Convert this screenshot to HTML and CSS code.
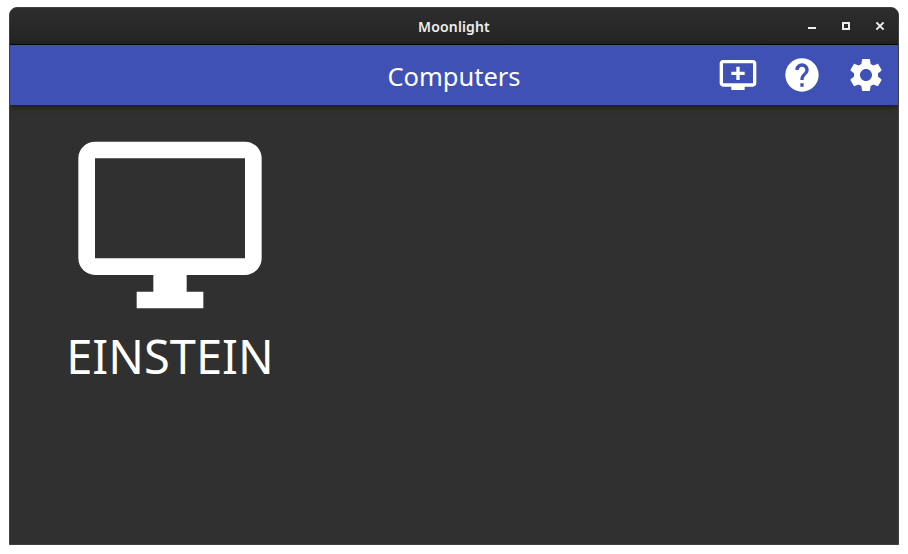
FILE: index.html
```html
<!DOCTYPE html>
<html lang="en">
<head>
<meta charset="utf-8">
<title>Moonlight</title>
<link rel="stylesheet" href="styles.css">
</head>
<body>
<div class="window">
  <header class="titlebar">
    <span class="window-title">Moonlight</span>
    <div class="window-controls">
      <svg width="10" height="10" viewBox="0 0 10 10"><path d="M1 6h8v2H1z"/></svg>
      <svg width="10" height="10" viewBox="0 0 10 10"><path fill-rule="evenodd" d="M1 1h8v8H1zM3 3v4h4V3z"/></svg>
      <svg width="10" height="10" viewBox="0 0 10 10"><path d="M1.4 1.4l7.2 7.2M8.6 1.4l-7.2 7.2" stroke="#eeeeec" stroke-width="2"/></svg>
    </div>
  </header>
  <nav class="toolbar">
    <h1 class="page-title">Computers</h1>
    <div class="actions">
      <svg class="icon" viewBox="0 0 24 24"><path d="M21 3H3c-1.11 0-2 .89-2 2v12c0 1.1.89 2 2 2h5v2h8v-2h5c1.1 0 1.99-.9 1.99-2L23 5c0-1.11-.9-2-2-2zm0 14H3V5h18v12zm-5-7v2h-3v3h-2v-3H8v-2h3V7h2v3h3z"/></svg>
      <svg class="icon" viewBox="0 0 24 24"><path d="M12 2C6.48 2 2 6.48 2 12s4.48 10 10 10 10-4.48 10-10S17.52 2 12 2zm1 17h-2v-2h2v2zm2.07-7.75l-.9.92C13.45 12.9 13 13.5 13 15h-2v-.5c0-1.1.45-2.1 1.17-2.83l1.24-1.26c.37-.36.59-.86.59-1.41 0-1.1-.9-2-2-2s-2 .9-2 2H8c0-2.21 1.79-4 4-4s4 1.79 4 4c0 .88-.36 1.68-.93 2.25z"/></svg>
      <svg class="icon" viewBox="0 0 24 24"><path d="M19.14 12.94c.04-.3.06-.61.06-.94 0-.32-.02-.64-.07-.94l2.03-1.58c.18-.14.23-.41.12-.61l-1.92-3.32c-.12-.22-.37-.29-.59-.22l-2.39.96c-.5-.38-1.03-.7-1.62-.94L14.4 2.81c-.04-.24-.24-.41-.48-.41h-3.84c-.24 0-.43.17-.47.41L9.25 5.35C8.66 5.59 8.12 5.92 7.63 6.29L5.24 5.33c-.22-.08-.47 0-.59.22L2.74 8.87c-.12.21-.08.47.12.61l2.03 1.58C4.84 11.36 4.8 11.69 4.8 12s.02.64.07.94l-2.03 1.58c-.18.14-.23.41-.12.61l1.92 3.32c.12.22.37.29.59.22l2.39-.96c.5.38 1.03.7 1.62.94l.36 2.54c.05.24.24.41.48.41h3.84c.24 0 .44-.17.47-.41l.36-2.54c.59-.24 1.13-.56 1.62-.94l2.39.96c.22.08.47 0 .59-.22l1.92-3.32c.12-.22.07-.47-.12-.61zM12 15.6c-1.98 0-3.6-1.62-3.6-3.6s1.62-3.6 3.6-3.6 3.6 1.62 3.6 3.6-1.62 3.6-3.6 3.6z"/></svg>
    </div>
  </nav>
  <main class="computers">
    <div class="computer">
      <svg class="computer-icon" viewBox="0 0 24 24"><path d="M21 2H3c-1.1 0-2 .9-2 2v12c0 1.1.9 2 2 2h7v2H8v2h8v-2h-2v-2h7c1.1 0 2-.9 2-2V4c0-1.1-.9-2-2-2zm0 14H3V4h18v12z"/></svg>
      <span class="computer-name">EINSTEIN</span>
    </div>
  </main>
</div>
</body>
</html>
```
FILE: styles.css
```css
* {
  box-sizing: border-box;
}

body {
  margin: 0;
  padding: 7px 9px 9px;
  height: 554px;
  background: #fff;
  font-family: "Noto Sans", "Open Sans", sans-serif;
  overflow: hidden;
}

svg {
  display: block;
  fill: #fff;
}

.window {
  display: flex;
  flex-direction: column;
  height: 538px;
  border: 1px solid #404040;
  border-radius: 8px 8px 0 0;
  background: #303030;
  overflow: hidden;
}

.titlebar {
  display: grid;
  grid-template-columns: 1fr auto 1fr;
  align-items: center;
  height: 37px;
  flex: none;
  background: linear-gradient(#2d2d2d, #242424);
  border-bottom: 1px solid #050505;
}

.window-title {
  grid-column: 2;
  padding-top: 1px;
  font-size: 14px;
  font-weight: 600;
  letter-spacing: 0.15px;
  line-height: 21px;
  color: #eeeeec;
}

.window-controls {
  justify-self: end;
  display: flex;
  gap: 24px;
  padding-right: 13px;
}

.window-controls svg {
  fill: #eeeeec;
}

.toolbar {
  display: grid;
  grid-template-columns: 1fr auto 1fr;
  align-items: center;
  height: 60px;
  flex: none;
  background: #3f51b5;
  box-shadow: 0 1px 6px rgba(0, 0, 0, 0.55);
}

.page-title {
  grid-column: 2;
  margin: 0;
  padding-top: 2px;
  font-size: 25.5px;
  font-weight: 400;
  line-height: 36px;
  color: #fff;
}

.actions {
  justify-self: end;
  display: flex;
  gap: 24px;
  padding-right: 12px;
}

.icon {
  width: 40px;
  height: 40px;
}

.computers {
  flex: 1;
  padding: 20px 10px;
}

.computer {
  display: flex;
  flex-direction: column;
  align-items: center;
  width: 300px;
}

.computer-icon {
  width: 200px;
  height: 200px;
}

.computer-name {
  font-size: 47px;
  line-height: 62px;
  color: #fff;
}
```
